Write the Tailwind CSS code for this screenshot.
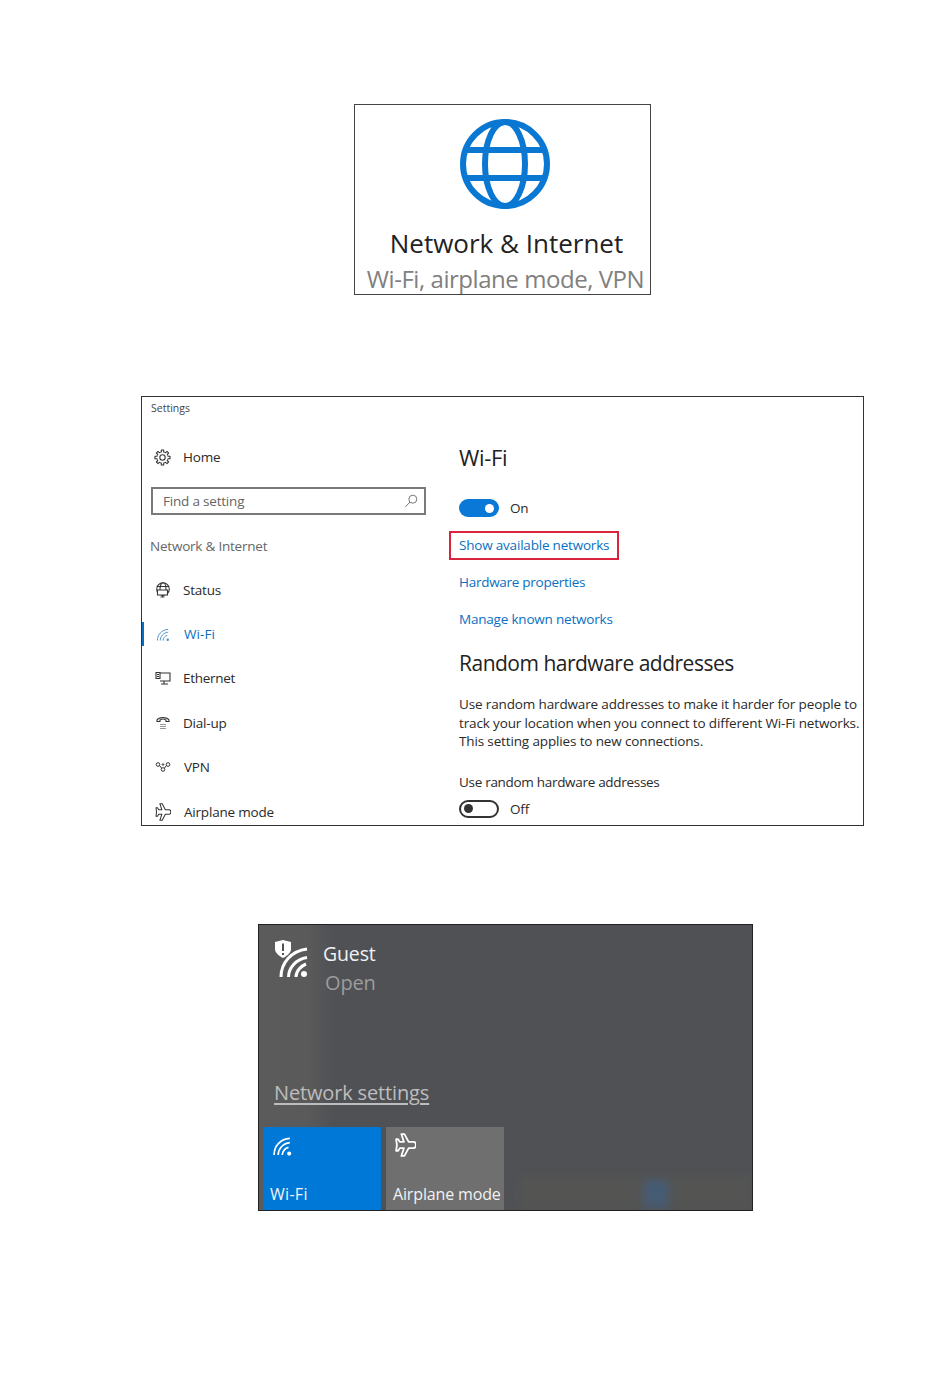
<!doctype html>
<html lang="en">
<head>
<meta charset="utf-8">
<script src="https://cdn.jsdelivr.net/npm/@tailwindcss/browser@4"></script>
<title>Wi-Fi settings</title>
</head>
<body class="bg-white">
<main class="w-[950px] h-[1381px] pt-[104px] flex flex-col font-['Open_Sans','Noto_Sans',sans-serif] overflow-hidden">

  <!-- Figure 1 -->
  <section class="ml-[354px] w-[297px] h-[191px] border border-[#444] flex flex-col items-center pt-[14px]">
    <svg class="w-[90px] h-[90px] shrink-0 ml-[5px]" viewBox="0 0 90 90" fill="none" stroke="#0a78d2" stroke-width="6">
      <circle cx="45" cy="45" r="42"/>
      <ellipse cx="45" cy="45" rx="20" ry="42"/>
      <path d="M6 31H84M6 59H84"/>
    </svg>
    <div class="mt-[17px] ml-[8px] h-[34px] leading-[34px] text-[26px] tracking-normal text-[#222] whitespace-nowrap">Network &amp; Internet</div>
    <div class="ml-[6px] mt-[4px] h-[30px] leading-[30px] text-[24px] tracking-[-0.45px] text-[#808080] whitespace-nowrap">Wi-Fi, airplane mode, VPN</div>
  </section>

  <!-- Figure 2 -->
  <section class="mt-[101px] ml-[141px] w-[723px] h-[430px] border border-[#333] overflow-hidden grid grid-cols-[317px_1fr] text-[13.5px] tracking-[-0.2px] text-[#2a2a2a]">
    <div class="flex flex-col">
      <div class="pl-[9px] pt-[3px] h-[38px] text-[10.5px] leading-[16px] tracking-normal text-[#444]">Settings</div>
      <div class="h-[44px] flex items-center pl-[12px] gap-[12px]">
        <svg class="w-[17px] h-[17px]" viewBox="0 0 24 24" fill="none" stroke="#333" stroke-width="1.500" stroke-linejoin="round">
          <circle cx="12" cy="12" r="3.800"/>
          <path d="M8.940 4.610L10.340 4.170L10.310 1.330H13.690L13.660 4.170L15.060 4.610"/>
          <path transform="rotate(45 12 12)" d="M8.940 4.610L10.340 4.170L10.310 1.330H13.690L13.660 4.170L15.060 4.610"/>
          <path transform="rotate(90 12 12)" d="M8.940 4.610L10.340 4.170L10.310 1.330H13.690L13.660 4.170L15.060 4.610"/>
          <path transform="rotate(135 12 12)" d="M8.940 4.610L10.340 4.170L10.310 1.330H13.690L13.660 4.170L15.060 4.610"/>
          <path transform="rotate(180 12 12)" d="M8.940 4.610L10.340 4.170L10.310 1.330H13.690L13.660 4.170L15.060 4.610"/>
          <path transform="rotate(225 12 12)" d="M8.940 4.610L10.340 4.170L10.310 1.330H13.690L13.660 4.170L15.060 4.610"/>
          <path transform="rotate(270 12 12)" d="M8.940 4.610L10.340 4.170L10.310 1.330H13.690L13.660 4.170L15.060 4.610"/>
          <path transform="rotate(315 12 12)" d="M8.940 4.610L10.340 4.170L10.310 1.330H13.690L13.660 4.170L15.060 4.610"/>
        </svg>
        <span>Home</span>
      </div>
      <div class="ml-[9px] w-[275px] h-[28px] mt-[8px] border-2 border-[#7a7a7a] flex items-center justify-between pl-[10px] pr-[6px] text-[#666]">
        <span>Find a setting</span>
        <svg class="w-[14px] h-[14px]" viewBox="0 0 14 14" fill="none" stroke="#777" stroke-width="1"><circle cx="8.800" cy="5.200" r="4"/><path d="M6 8 1.500 12.800"/></svg>
      </div>
      <div class="pl-[8px] h-[20px] mt-[21px] leading-[20px] tracking-[-0.22px] text-[#666]">Network &amp; Internet</div>
      <div class="h-[44.400px] mt-[12px] flex items-center pl-[13px] gap-[12px]">
        <svg class="w-[16px] h-[16px]" viewBox="0 0 16 16" fill="none" stroke="#333" stroke-width="1.100"><circle cx="8" cy="7" r="6.300"/><ellipse cx="8" cy="7" rx="3" ry="6.300"/><path d="M1.700 4.500h12.600"/><path d="M2.500 8h10v5h-10zM5.500 15h4M7.500 13v2" fill="#fff"/></svg>
        <span>Status</span>
      </div>
      <div class="h-[44.400px] flex items-center pl-[14px] gap-[13px] relative text-[#0a6fc2]">
        <span class="absolute left-0 top-[10px] w-[2px] h-[24px] bg-[#0a6fc2]"></span>
        <svg class="w-[15px] h-[15px]" viewBox="0 0 16 16" fill="none" stroke="#4a8fc9" stroke-width="1"><path d="M1.500 14.500C1.500 8 6 3 13 2.500M4.500 14.500C4.500 10 8 6 13 5.500M7.500 14.500C7.500 12 9.500 9.500 12 9"/><circle cx="12.500" cy="13.500" r="1.300" fill="#4a8fc9" stroke="none"/></svg>
        <span class="tracking-[0.1px]">Wi-Fi</span>
      </div>
      <div class="h-[44.400px] flex items-center pl-[13px] gap-[12px] mt-[-0.5px]">
        <svg class="w-[16px] h-[16px]" viewBox="0 0 16 16" fill="none" stroke="#333" stroke-width="1.100"><path d="M5 3h10v8H5M1 2.500h4v6H1zM2 4.500h2M2 6.500h2M9 11v2.500M6 14h7"/></svg>
        <span class="tracking-[-0.3px]">Ethernet</span>
      </div>
      <div class="h-[44.400px] flex items-center pl-[13px] gap-[12px]">
        <svg class="w-[16px] h-[16px]" viewBox="0 0 16 16" fill="none" stroke="#333" stroke-width="1.100"><path d="M2 6.500V5C4 1.800 12 1.800 14 5v1.500h-3V5C9.500 4 6.500 4 5 5v1.500z"/><path d="M5.500 9.500h1M7.500 9.500h1M9.500 9.500h1M5.500 11.500h1M7.500 11.500h1M9.500 11.500h1M5.500 13.500h1M7.500 13.500h1M9.500 13.500h1"/></svg>
        <span>Dial-up</span>
      </div>
      <div class="h-[44.400px] flex items-center pl-[13px] gap-[13px]">
        <svg class="w-[16px] h-[16px]" viewBox="0 0 16 16" fill="none" stroke="#333" stroke-width="1"><circle cx="3" cy="5.500" r="1.800"/><circle cx="8" cy="10.500" r="1.800"/><circle cx="13" cy="5.500" r="1.800"/><circle cx="8" cy="5.500" r=".8"/><path d="M4.500 6.500 6.500 9M11.500 6.500 9.500 9"/></svg>
        <span>VPN</span>
      </div>
      <div class="h-[44.400px] flex items-center pl-[13px] gap-[13px]">
        <svg class="w-[16px] h-[18px]" viewBox="0 0 20 23" fill="none" stroke="#333" stroke-width="1.300" stroke-linejoin="round"><path d="M6 1H9L13 8.500H17.500C19 8.500 20 10 20 11.500C20 13 19 14.500 17.500 14.500H13L9 22H6L8.500 14.500H4.500L3 17H1L1.800 11.500L1 6H3L4.500 8.500H8.500Z"/></svg>
        <span>Airplane mode</span>
      </div>
    </div>

    <div class="flex flex-col pt-[45px]">
      <div class="h-[30px] leading-[30px] text-[22px] tracking-[-0.3px] text-[#222]">Wi-Fi</div>
      <div class="mt-[27px] h-[18px] flex items-center gap-[11px]">
        <span class="w-[40px] h-[18px] rounded-full bg-[#0a78d7] flex items-center justify-end pr-[5px]"><span class="w-[9px] h-[9px] rounded-full bg-white"></span></span>
        <span>On</span>
      </div>
      <div class="mt-[14px] ml-[-10px] w-[170px] h-[29px] border-2 border-[#d9243c] pl-[8px] flex items-center text-[#0a6fc2]">Show available networks</div>
      <div class="mt-[8px] h-[29px] flex items-center tracking-[-0.27px] text-[#0a6fc2]">Hardware properties</div>
      <div class="mt-[8px] h-[29px] flex items-center text-[#0a6fc2]">Manage known networks</div>
      <div class="mt-[13px] h-[32px] leading-[32px] text-[21px] tracking-[-0.5px] text-[#222]">Random hardware addresses</div>
      <p class="mt-[16px] w-[410px] leading-[18.500px] tracking-[-0.14px]">Use random hardware addresses to make it harder for people to track your location when you connect to different Wi-Fi networks. This setting applies to new connections.</p>
      <div class="mt-[21px] h-[20px] leading-[20px] tracking-[-0.3px]">Use random hardware addresses</div>
      <div class="mt-[8px] h-[18px] flex items-center gap-[11px]">
        <span class="w-[40px] h-[18px] rounded-full border-2 border-[#333] flex items-center pl-[3px]"><span class="w-[9px] h-[9px] rounded-full bg-[#333]"></span></span>
        <span class="mt-[1px]">Off</span>
      </div>
    </div>
  </section>

  <!-- Figure 3 -->
  <section class="relative mt-[98px] ml-[258px] w-[495px] h-[287px] border border-[#222] overflow-hidden flex flex-col bg-[linear-gradient(90deg,#5b5b5b_0%,#5a5a5a_10%,#505155_15%,#505155_100%)]">
    <div class="absolute left-[260px] right-0 bottom-0 h-[34px] bg-[#5a5a50]/40 blur-[6px]"></div>
    <div class="absolute left-[385px] bottom-[2px] w-[24px] h-[28px] bg-[#3f5f85]/70 blur-[5px]"></div>
    <div class="relative h-[153px] flex items-start pt-[14px] pl-[16px]">
      <svg class="w-[36px] h-[40px]" viewBox="0 0 36 40" fill="none" stroke="#fff" stroke-width="3">
        <path d="M8 1l8 2v7c0 4-4 7-8 9-4-2-8-5-8-9V3z" fill="#fff" stroke="none"/>
        <path d="M8 4.500v7.500M8 14v2" stroke="#505155" stroke-width="2"/>
        <path d="M6 38C6 24 16 12 32 10M13.500 38C13.500 29 21 20 32 18.500M21 38C21 32 26 27 31 25"/>
        <circle cx="29" cy="35" r="3" fill="#fff" stroke="none"/>
      </svg>
      <div class="ml-[12px] flex flex-col">
        <span class="h-[30px] leading-[30px] text-[19.500px] tracking-[-0.15px] text-[#f2f2f2]">Guest</span>
        <span class="ml-[2px] h-[28px] leading-[28px] text-[20px] tracking-[-0.15px] text-[#9c9c9c]">Open</span>
      </div>
    </div>
    <div class="relative pl-[15px] h-[49px]">
      <span class="text-[20px] tracking-[-0.15px] leading-[30px] underline underline-offset-[3px] text-[#bdbdbd]">Network settings</span>
    </div>
    <div class="relative pl-[4px] flex gap-[5px]">
      <div class="w-[118px] h-[83px] bg-[#0078d7] flex flex-col pl-[7px] pt-[8px] text-[16px] tracking-[0.3px] text-[#f2f2f2]">
        <svg class="w-[22px] h-[22px] ml-[2px]" viewBox="0 0 16 16" fill="none" stroke="#fff" stroke-width="1.200"><path d="M1.500 14.500C1.500 8 6 3 13 2.500M4.500 14.500C4.500 10 8 6 13 5.500M7.500 14.500C7.500 12 9.500 9.500 12 9"/><circle cx="12.500" cy="13.500" r="1.500" fill="#fff" stroke="none"/></svg>
        <span class="mt-[25px] leading-[24px]">Wi-Fi</span>
      </div>
      <div class="w-[118px] h-[83px] bg-[#6f6f6f] flex flex-col pl-[7px] pt-[6px] text-[16px] tracking-[-0.15px] text-[#f2f2f2] whitespace-nowrap">
        <svg class="w-[21px] h-[24px] ml-[2px]" viewBox="0 0 20 23" fill="none" stroke="#fff" stroke-width="1.700" stroke-linejoin="round"><path d="M6 1H9L13 8.500H17.500C19 8.500 20 10 20 11.500C20 13 19 14.500 17.500 14.500H13L9 22H6L8.500 14.500H4.500L3 17H1L1.800 11.500L1 6H3L4.500 8.500H8.500Z"/></svg>
        <span class="mt-[25px] leading-[24px]">Airplane mode</span>
      </div>
    </div>
  </section>
</main>
</body>
</html>
